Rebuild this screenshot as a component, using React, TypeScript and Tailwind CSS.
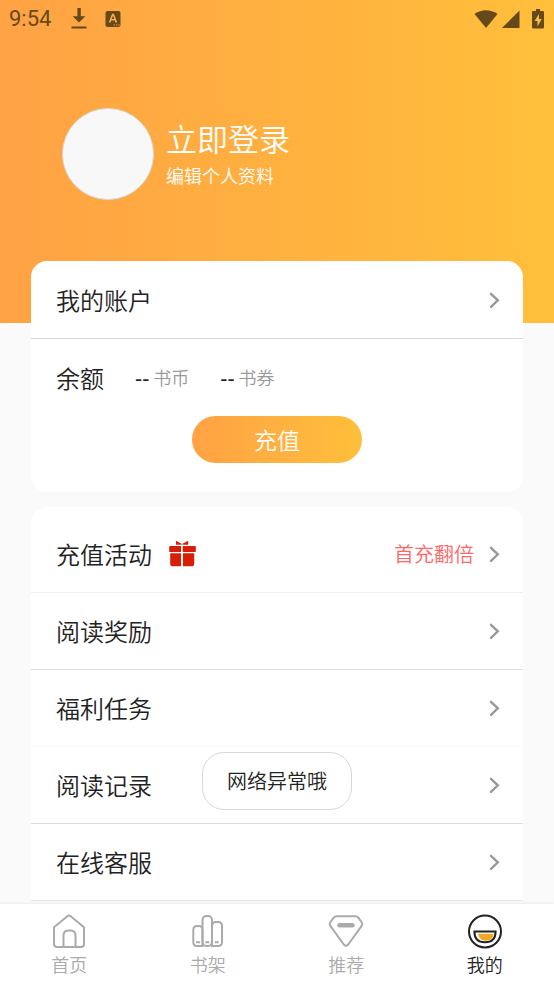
import type { ReactNode } from 'react';

interface MenuItem {
  label: string;
  icon?: ReactNode;
  note?: string;
  line: string;
}

function Chevron() {
  return (
    <svg className="h-4 w-3 shrink-0" viewBox="0 0 12 16" fill="none" stroke="#999999" strokeWidth="2.4">
      <path d="M2 1.8 8.800 8.300 2 14.800" strokeLinecap="round" strokeLinejoin="miter" />
    </svg>
  );
}

function GiftIcon() {
  return (
    <svg className="h-7 w-7" viewBox="0 0 28 28" fill="#d81e06">
      <path d="M8 .8l5.600 3v1H8zM20.200 .8l-5.800 3v1h5.800z" />
      <path d="M2 6h11v6H1.200V7c0-.6.3-1 .8-1zM14.800 6H27c.5 0 .8.400.8 1v5h-13zM2.200 13.300H13V26.300H4.600c-1.400 0-2.400-1-2.400-2.400zM15 13.300h11.200v10.600c0 1.400-1 2.400-2.400 2.400H15z" />
    </svg>
  );
}

function HomeIcon() {
  return (
    <svg className="h-9 w-9" viewBox="0 0 36 36" fill="none" stroke="#aaaaaa" strokeWidth="2" strokeLinejoin="round">
      <path d="M3 14.200 16.300 3.200q1.700-1.400 3.400 0L33 14.200V31q0 3-3 3H6q-3 0-3-3z" />
      <path d="M12.500 34V22.500q0-5 5-5h2q5 0 5 5V34" />
    </svg>
  );
}

function ShelfIcon() {
  return (
    <svg className="h-9 w-9" viewBox="0 0 36 36" fill="none" stroke="#aaaaaa" strokeWidth="2">
      <path d="M12.500 33H7q-3.700 0-3.700-3.700V17q0-4 4-4H8.500q4 0 4 4z" />
      <rect x="12.500" y="3" width="9.500" height="30" rx="4" />
      <path d="M22 13q0-4 4-4h2q4 0 4 4v16.300q0 3.700-3.700 3.700H22z" />
      <path d="M6 29.300h4M15.300 29.300h4M24.700 29.300h4" />
    </svg>
  );
}

function RecommendIcon() {
  return (
    <svg className="h-9 w-9" viewBox="0 0 36 36" fill="none" stroke="#aaaaaa" strokeWidth="2" strokeLinejoin="round">
      <path d="M8.500 3.300h19q1.800 0 3 1.500l3 4.200q1.500 2 0 4.200L20.200 31.500q-2.200 2.400-4.400 0L2.500 13.200q-1.500-2.200 0-4.200l3-4.200q1.200-1.500 3-1.500z" />
      <path d="M11.500 12.300h13" strokeWidth="4.400" strokeLinecap="round" />
    </svg>
  );
}

function MineIcon() {
  return (
    <svg className="h-9 w-9" viewBox="0 0 36 36" fill="none" stroke="#222222" strokeWidth="2">
      <circle cx="18" cy="18.500" r="16" />
      <path d="M7.400 18.500h21.200q0 10.800-10.600 10.800T7.400 18.500z" fill="#ffffff" />
      <path d="M11 20.800h15.600q-.8 7-7.600 7-6.600 0-8-7z" fill="#f5a623" stroke="none" />
    </svg>
  );
}

const menu: MenuItem[] = [
  { label: '充值活动', icon: <GiftIcon />, note: '首充翻倍', line: 'border-[#eeeeee]' },
  { label: '阅读奖励', line: 'border-[#dddddd]' },
  { label: '福利任务', line: 'border-[#fafafa]' },
  { label: '阅读记录', line: 'border-[#dddddd]' },
  { label: '在线客服', line: 'border-[#e5e5e5]' },
];

const tabs = [
  { label: '首页', icon: <HomeIcon />, active: false },
  { label: '书架', icon: <ShelfIcon />, active: false },
  { label: '推荐', icon: <RecommendIcon />, active: false },
  { label: '我的', icon: <MineIcon />, active: true },
];

function StatusBar() {
  return (
    <div className="flex h-[38px] items-center justify-between pl-[9px] pr-[10px] text-[#66491a]">
      <div className="flex items-center">
        <span className="font-[Roboto] text-[22px] font-normal leading-7">9:54</span>
        <svg className="ml-5 h-[22px] w-4" viewBox="0 0 16 22" fill="currentColor">
          <path d="M6.400 0h3.400v8.200h4.600L8 14.500 1.600 8.200h4.800zM.5 18.500h15v2H.5z" />
        </svg>
        <svg className="ml-[18px] h-4 w-4" viewBox="0 0 16 16">
          <rect x=".5" width="15" height="16" rx="2" fill="currentColor" />
          <path d="m4.600 11.500 3-8h.8l3 8M5.800 8.800h4.400" fill="none" stroke="#ffaa43" strokeWidth="1.600" />
          <path d="M8.500 14h1.300M11 14h1.300M13.300 14h1.300" stroke="#ffaa43" strokeWidth="1.200" />
        </svg>
      </div>
      <div className="flex items-center">
        <svg className="h-[19px] w-6" viewBox="0 0 24 19" fill="currentColor">
          <path d="M.5 4Q12-3.500 23.500 4L12 18z" />
        </svg>
        <svg className="ml-1 h-[19px] w-[18px]" viewBox="0 0 18 19" fill="currentColor">
          <path d="M17.500.5V18H0z" />
        </svg>
        <svg className="ml-3 h-5 w-3" viewBox="0 0 12 20">
          <path d="M4 0h4v2h2.800q1.200 0 1.200 1.200v15q0 1.200-1.200 1.200H1.200Q0 19.400 0 18.200V3.200Q0 2 1.200 2H4z" fill="currentColor" />
          <path d="M7 5 2.500 12H5.500v5.500L9.700 10H7z" fill="#ffbc3b" />
        </svg>
      </div>
    </div>
  );
}

export default function App() {
  return (
    <div className="relative flex h-screen flex-col overflow-hidden bg-[#fafafa] font-['Noto_Sans_CJK_SC',sans-serif] font-[350] text-[#222222]">
      <main className="min-h-0 flex-1 overflow-hidden">
        <header className="h-[323px] bg-linear-to-r from-[#ffa244] to-[#ffbf3a]">
          <StatusBar />
          <div className="flex items-center gap-3 px-[62px] pt-[70px] text-white">
            <div className="h-[92px] w-[92px] shrink-0 rounded-full border border-[#d8d8d8] bg-[#f8f8f8]" />
            <div>
              <h1 className="text-[31px] font-[350] leading-[42px]">立即登录</h1>
              <p className="text-[18px] leading-8">编辑个人资料</p>
            </div>
          </div>
        </header>

        <div className="-mt-[62px] flex flex-col gap-[15px] px-[31px]">
          <section className="rounded-2xl bg-white pb-[29px]">
            <button className="flex h-[78px] w-full items-center justify-between border-b border-[#d8d8d8] pl-[25px] pr-[22px]">
              <span className="text-[24px]">我的账户</span>
              <Chevron />
            </button>
            <div className="flex h-[77px] items-center pl-[25px]">
              <span className="text-[24px]">余额</span>
              <span className="ml-[31px] flex items-center gap-1">
                <b className="text-[20px] font-medium">--</b>
                <span className="text-[18px] text-[#999999]">书币</span>
              </span>
              <span className="ml-[31px] flex items-center gap-1">
                <b className="text-[20px] font-medium">--</b>
                <span className="text-[18px] text-[#999999]">书券</span>
              </span>
            </div>
            <button className="mx-auto block h-[47px] w-[170px] rounded-full bg-linear-to-r from-[#ffa244] to-[#ffbf3a] text-[23px] text-white">
              充值
            </button>
          </section>

          <section className="rounded-t-2xl bg-white pt-[9px]">
            {menu.map((item) => (
              <button
                key={item.label}
                className={`flex h-[77px] w-full items-center border-b pl-[25px] pr-[22px] ${item.line}`}
              >
                <span className="mr-4 text-[24px]">{item.label}</span>
                {item.icon}
                <span className="ml-auto mr-[15px] text-[20px] text-[#ff6666]">{item.note}</span>
                <Chevron />
              </button>
            ))}
          </section>
        </div>
      </main>

      {/* toast */}
      <div
        role="status"
        className="absolute bottom-[174px] left-1/2 flex h-[58px] -translate-x-1/2 items-center whitespace-nowrap rounded-[22px] border border-[#d8d8d8] bg-white px-6 text-[20px]"
      >
        网络异常哦
      </div>

      <nav className="grid h-20 shrink-0 grid-cols-4 bg-white shadow-[0_-1px_3px_rgba(0,0,0,0.06)]">
        {tabs.map((tab) => (
          <button key={tab.label} className="flex flex-col items-center pt-[9px]">
            {tab.icon}
            <span className={`text-[18px] leading-[30px] ${tab.active ? 'text-[#222222]' : 'text-[#aaaaaa]'}`}>{tab.label}</span>
          </button>
        ))}
      </nav>
    </div>
  );
}
